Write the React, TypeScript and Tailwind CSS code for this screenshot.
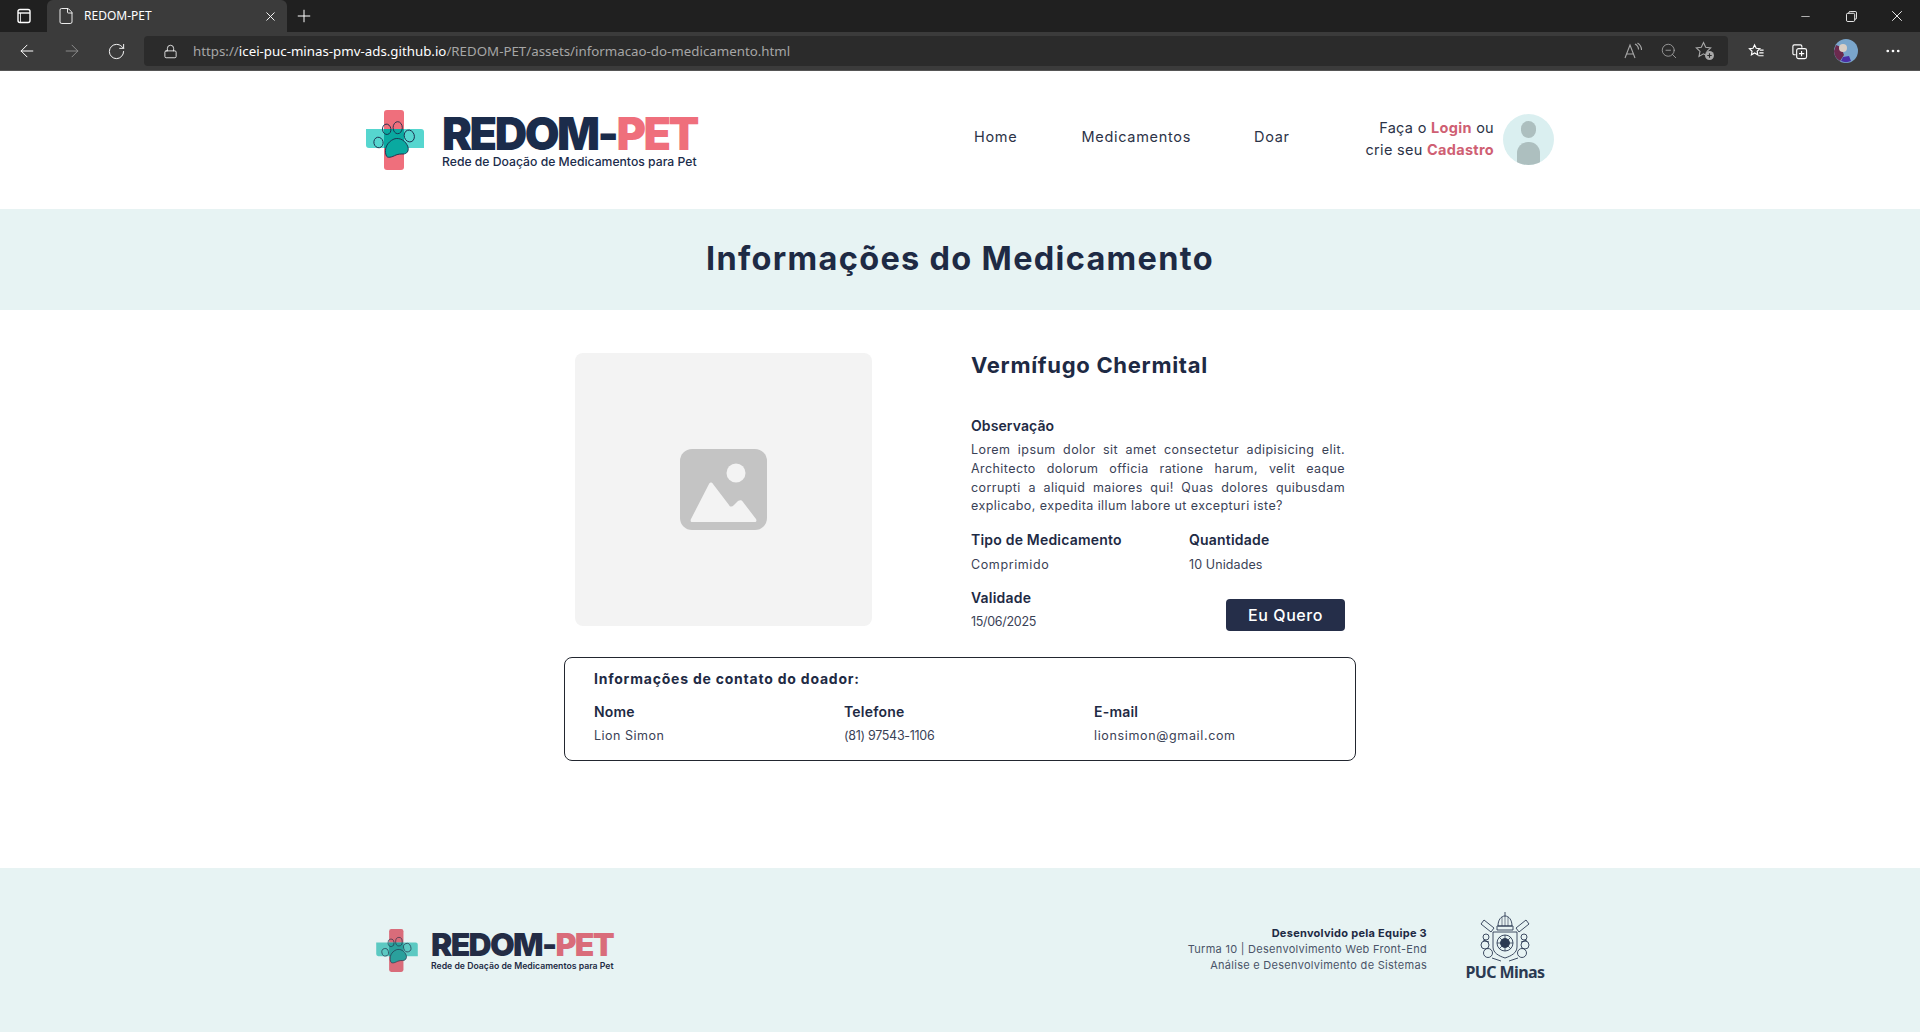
import React from 'react';
import { ArrowLeft, ArrowRight, File, Lock, Minus, MoreHorizontal, Plus, RotateCw, X, ZoomOut } from 'lucide-react';

const BODY_FONT = "font-['Inter','Noto_Sans',sans-serif]";

const PawCross: React.FC<{ className: string; muted?: boolean }> = ({ className, muted }) => {
  const red = muted ? '#d96c7a' : '#ef6f7c';
  const teal = muted ? '#5cc9c2' : '#56d6cf';
  const mid = muted ? '#2aa09c' : '#0aa9a0';
  const ink = muted ? '#232c45' : '#1b2c4b';
  return (
    <svg viewBox="0 0 58 60" className={className}>
      <rect x="18" y="0" width="20" height="60" rx="3" fill={red} />
      <path d="M0 19h55a3 3 0 0 1 3 3v16H3a3 3 0 0 1-3-3z" fill={teal} />
      <rect x="18" y="19" width="20" height="19" fill={mid} />
      <g fill="none" stroke={ink} strokeWidth="0.9">
        <ellipse cx="12.500" cy="32.500" rx="4.600" ry="5.300" transform="rotate(-12 12.500 32.500)" />
        <ellipse cx="20.700" cy="19.300" rx="4.200" ry="5.200" transform="rotate(-8 20.700 19.300)" />
        <ellipse cx="31.700" cy="17.700" rx="4.600" ry="6" />
        <ellipse cx="43.300" cy="26" rx="5" ry="6" transform="rotate(-18 43.300 26)" />
        <path d="M20 45c-2-6 1-13 8-16 6-2 12 2 14 8 1 4-1 7-5 7-3 0-4 0-7 1-4 2-9 4-10 0z" fill={mid} />
      </g>
    </svg>
  );
};

const Logo: React.FC<{ footer?: boolean }> = ({ footer }) =>
  footer ? (
    <div className="flex items-center gap-[13px] w-[240px] h-[50px]">
      <PawCross muted className="w-[42px] h-[43px] shrink-0" />
      <div className="flex flex-col mt-[2px]">
        <span className="font-['Inter',sans-serif] font-black text-[32px] leading-[30px] tracking-[-1.7px] text-[#232c45] whitespace-nowrap">
          REDOM-<span className="text-[#d96c7a]">PET</span>
        </span>
        <span className="font-['Inter',sans-serif] font-semibold text-[8.7px] leading-[11px] mt-[1px] text-[#232c45] whitespace-nowrap">
          Rede de Doação de Medicamentos para Pet
        </span>
      </div>
    </div>
  ) : (
    <div className="flex items-center gap-[18px] w-[332px] h-[60px]">
      <PawCross className="w-[58px] h-[60px] shrink-0" />
      <div className="flex flex-col mt-[2px]">
        <span className="font-['Inter',sans-serif] font-black text-[45px] leading-[40px] tracking-[-2.5px] text-[#1b2c4b] whitespace-nowrap">
          REDOM-<span className="text-[#ef6f7c]">PET</span>
        </span>
        <span className="font-['Inter',sans-serif] font-medium text-[12.2px] leading-[14px] mt-[1px] text-[#1b2c4b] whitespace-nowrap">
          Rede de Doação de Medicamentos para Pet
        </span>
      </div>
    </div>
  );

const PucCrest = () => (
  <svg viewBox="0 0 52 50" className="w-[52px] h-[50px]" fill="none" stroke="#2b3a52" strokeWidth="0.9">
    <path d="M26 0v4M19 14c0-6 3-10 7-10s7 4 7 10z" />
    <path d="M23 5v9M29 5v9M26 4v10" strokeWidth="0.6" />
    <path d="M18 14h16v4H18z" />
    <path d="M5 8l10 8-3 4-10-8zM47 8l-10 8 3 4 10-8z" />
    <path d="M14 20h24v15c0 6-6 9-12 11-6-2-12-5-12-11z" />
    <circle cx="26" cy="31" r="8" />
    <circle cx="26" cy="31" r="4.500" fill="#2b3a52" />
    <path d="M26 23v16M18 31h16M20 25l12 12M32 25L20 37" strokeWidth="0.8" />
    <circle cx="7" cy="25" r="3" />
    <circle cx="45" cy="25" r="3" />
    <circle cx="6" cy="33" r="4" />
    <circle cx="46" cy="33" r="4" />
    <circle cx="9" cy="41" r="4.500" />
    <circle cx="43" cy="41" r="4.500" />
    <path d="M4 28l6 2M48 28l-6 2M13 46c3 1 6 2 9 3M39 46c-3 1-6 2-9 3" />
  </svg>
);

const TabIcon = () => (
  <svg viewBox="0 0 16 16" className="w-[16px] h-[16px]" fill="none" stroke="#fff" strokeWidth="1.4">
    <rect x="2" y="1.500" width="12" height="13" rx="2" />
    <path d="M2 5h12" />
    <path d="M4.500 5v9" strokeWidth="0.8" />
  </svg>
);

const BrowserChrome = () => (
  <div className="shrink-0 font-['Noto_Sans',sans-serif]">
    <div className="h-[32px] bg-[#202020] flex items-center relative">
      <div className="w-[47px] flex justify-center"><TabIcon /></div>
      <div className="w-[240px] h-[32px] bg-[#3b3b3b] rounded-t-[6px] flex items-center pl-[10px] pr-[9px]">
        <File size={18} color="#fff" strokeWidth={1.2} />
        <span className="ml-[9px] text-[12px] text-white flex-1">REDOM-PET</span>
        <X size={15} color="#fff" strokeWidth={1.5} />
      </div>
      <div className="ml-[7px]"><Plus size={20} color="#fff" strokeWidth={1.2} /></div>
      <div className="ml-auto flex items-center">
        <div className="w-[46px] flex justify-center"><Minus size={13} color="#fff" strokeWidth={1.2} /></div>
        <div className="w-[46px] flex justify-center">
          <svg viewBox="0 0 12 12" className="w-[11px] h-[11px]" fill="none" stroke="#fff" strokeWidth="1">
            <rect x="0.500" y="2.500" width="9" height="9" rx="1.500" />
            <path d="M3 2.500V2a1.500 1.500 0 0 1 1.500-1.500H10A1.500 1.500 0 0 1 11.500 2v5.500A1.500 1.500 0 0 1 10 9h-.5" />
          </svg>
        </div>
        <div className="w-[46px] flex justify-center"><X size={18} color="#fff" strokeWidth={1.2} /></div>
      </div>
    </div>
    <div className="h-[39px] bg-[#3b3b3b] flex items-center border-b border-[#555555]">
      <div className="w-[144px] flex items-center pl-[17px] gap-[25px]">
        <ArrowLeft size={20} color="#fff" strokeWidth={1.2} />
        <ArrowRight size={20} color="#8a8a8a" strokeWidth={1.2} />
        <RotateCw size={19} color="#fff" strokeWidth={1.2} />
      </div>
      <div className="w-[1584px] h-[30px] bg-[#2b2b2b] rounded-[4px] flex items-center pl-[19px] pr-[13px]">
        <Lock size={15} color="#fff" strokeWidth={1.3} />
        <span className="ml-[15px] pt-[2px] text-[13.3px] text-[#a6a6a6] whitespace-nowrap">
          https://<span className="text-white">icei-puc-minas-pmv-ads.github.io</span>/REDOM-PET/assets/informacao-do-medicamento.html
        </span>
        <div className="ml-auto flex items-center gap-[17px]">
          <svg viewBox="0 0 19 18" className="w-[19px] h-[18px]" fill="none" stroke="#a8a8a8" strokeWidth="1.100">
            <path d="M1 16L6 3l5 13M2.800 12h6.400" />
            <path d="M11 2c2 1 3.500 3 3.500 5.500M13.500 1c2.500 1.500 4 4 4 7" />
          </svg>
          <ZoomOut size={18} color="#a8a8a8" strokeWidth={1.1} />
          <svg viewBox="0 0 20 20" className="w-[20px] h-[20px]" fill="none" stroke="#a8a8a8" strokeWidth="1.100">
            <path d="M8.500 1.500l2.200 4.800 5 .6-3.700 3.500 1 5-4.500-2.600-4.500 2.600 1-5L1.300 6.900l5-.6z" />
            <circle cx="14.500" cy="14.500" r="4.500" fill="#a8a8a8" stroke="none" />
            <path d="M14.500 12.300v4.400M12.300 14.500h4.400" stroke="#2b2b2b" />
          </svg>
        </div>
      </div>
      <div className="flex-1 flex items-center pl-[20px] gap-[26px]">
        <svg viewBox="0 0 18 18" className="w-[17px] h-[17px]" fill="none" stroke="#fff" strokeWidth="1.200">
          <path d="M7 2l1.700 3.600 3.800.5-2.800 2.600.7 3.800L7 10.600 3.600 12.500l.7-3.800L1.500 6.100l3.800-.5z" />
          <path d="M12.500 7.500h4M12 10.500h4.500M11 13.500h5.500" />
        </svg>
        <svg viewBox="0 0 18 18" className="w-[17px] h-[17px]" fill="none" stroke="#fff" strokeWidth="1.200">
          <path d="M5 12.500H3.500A1.500 1.500 0 0 1 2 11V3.500A1.500 1.500 0 0 1 3.500 2H10a1.500 1.500 0 0 1 1.500 1.500V5" />
          <rect x="6" y="6" width="10.500" height="10.500" rx="2" />
          <path d="M11.200 8.500v5.500M8.500 11.200H14" />
        </svg>
        <svg viewBox="0 0 24 24" className="w-[24px] h-[24px]">
          <circle cx="12" cy="12" r="12" fill="#7aa6cc" />
          <path d="M0 12a12 12 0 0 0 6 10l4-6-3-8-5-2z" fill="#6b2a4e" />
          <path d="M7 22a12 12 0 0 0 10 0l-2-5-6 1z" fill="#4a2fa8" />
          <circle cx="9" cy="9" r="4" fill="#d9cfc6" />
        </svg>
        <MoreHorizontal size={18} color="#fff" strokeWidth={1.6} />
      </div>
    </div>
  </div>
);

const Field: React.FC<{ label: string; value: string; className?: string; valueClass?: string }> = ({
  label,
  value,
  className,
  valueClass = 'tracking-[0.5px]',
}) => (
  <div className={className}>
    <div className="text-[14px] leading-[18px] font-semibold tracking-[0.2px] text-[#1e2a44]">{label}</div>
    <div className={`mt-[6px] text-[12.5px] leading-[18px] text-[#3a4256] ${valueClass}`}>{value}</div>
  </div>
);

export default function App() {
  return (
    <div className={`h-screen flex flex-col overflow-hidden bg-white ${BODY_FONT}`}>
      <BrowserChrome />

      <header className="h-[138px] shrink-0 flex justify-center pt-[39px]">
        <div className="w-[1188px] flex items-start">
          <Logo />
          <nav className="ml-[276px] flex items-center h-[54px] text-[14.5px] tracking-[0.7px] text-[#2c3347]">
            <a>Home</a>
            <a className="ml-[64px]">Medicamentos</a>
            <a className="ml-[63px]">Doar</a>
          </nav>
          <div className="ml-auto flex items-center gap-[9px] mt-[4px]">
            <div className="-mt-[2px] text-right text-[14.5px] leading-[22px] tracking-[0.3px] text-[#2c3347]">
              <div>Faça o <span className="font-bold text-[#cf5f73]">Login</span> ou</div>
              <div>crie seu <span className="font-bold text-[#cf5f73]">Cadastro</span></div>
            </div>
            <div className="w-[51px] h-[51px] rounded-full bg-[#daeff0] overflow-hidden flex flex-col items-center">
              <div className="w-[15px] h-[18px] rounded-full bg-[#adbfbf] mt-[7px]" />
              <div className="w-[23px] h-[24px] rounded-t-[11px] bg-[#adbfbf] mt-[4px]" />
            </div>
          </div>
        </div>
      </header>

      <div className="h-[101px] shrink-0 bg-[#e7f3f3] flex items-center justify-center">
        <h1 className="text-[32.5px] font-bold tracking-[1.3px] text-[#1e2a44]">Informações do Medicamento</h1>
      </div>

      <main className="flex-1 pt-[43px]">
        <div className="w-[792px] mx-auto">
          <div className="flex pl-[11px]">
            <div className="w-[297px] h-[273px] bg-[#f3f3f3] rounded-[8px] flex items-center justify-center">
              <svg viewBox="0 0 87 81" className="w-[87px] h-[81px]">
                <rect width="87" height="81" rx="12" fill="#c4c4c4" />
                <circle cx="56" cy="24" r="9.500" fill="#f3f3f3" />
                <path
                  d="M29 35c1-2 3-2 4 0l16 21c1 2 3 2 5 0l4-4c2-1 4-1 5 1l13 17c1 2 0 3-1 3H12c-1 0-2-1-1-3z"
                  fill="#f3f3f3"
                />
              </svg>
            </div>
            <div className="ml-[99px] w-[374px]">
              <h2 className="text-[22px] leading-[24px] font-bold tracking-[0.7px] text-[#1e2a44]">Vermífugo Chermital</h2>
              <div className="mt-[40px] text-[14px] leading-[18px] font-semibold tracking-[0.1px] text-[#1e2a44]">Observação</div>
              <p className="mt-[6px] text-[12.5px] leading-[18.8px] tracking-[0.42px] text-justify text-[#3a4256]">
                Lorem ipsum dolor sit amet consectetur adipisicing elit. Architecto dolorum officia ratione harum, velit eaque corrupti a aliquid maiores qui! Quas dolores quibusdam explicabo, expedita illum labore ut excepturi iste?
              </p>
              <div className="mt-[15px] flex">
                <Field label="Tipo de Medicamento" value="Comprimido" className="w-[218px]" valueClass="pt-[1px] tracking-[0.6px]" />
                <Field label="Quantidade" value="10 Unidades" valueClass="pt-[1px] tracking-[0.1px]" />
              </div>
              <div className="mt-[15px] flex items-end justify-between">
                <Field label="Validade" value="15/06/2025" valueClass="tracking-[-0.3px]" />
                <button className="w-[119px] h-[32px] rounded-[4px] bg-[#252e49] text-white text-[16px] font-medium tracking-[0.6px]">
                  Eu Quero
                </button>
              </div>
            </div>
          </div>

          <section className="mt-[26px] h-[104px] border border-[#22262f] rounded-[8px] px-[29px] pt-[12px]">
            <h3 className="text-[14px] leading-[18px] font-bold tracking-[0.78px] text-[#1e2a44]">Informações de contato do doador:</h3>
            <div className="mt-[15px] grid grid-cols-[250px_250px_1fr]">
              <Field label="Nome" value="Lion Simon" />
              <Field label="Telefone" value="(81) 97543-1106" valueClass="tracking-[-0.3px]" />
              <Field label="E-mail" value="lionsimon@gmail.com" valueClass="tracking-[0.65px]" />
            </div>
          </section>
        </div>
      </main>

      <footer className="h-[164px] shrink-0 bg-[#e7f3f3] flex justify-center">
        <div className="w-[1168px] pt-[57px] flex items-start">
          <Logo footer />
          <div className="ml-auto text-right text-[11px] leading-[16px] text-[#4a5468] tracking-[0.28px]">
            <div className="font-bold text-[#1e2a44]">Desenvolvido pela Equipe 3</div>
            <div>Turma 10 | Desenvolvimento Web Front-End</div>
            <div>Análise e Desenvolvimento de Sistemas</div>
          </div>
          <div className="ml-[39px] -mt-[13px] flex flex-col items-center w-[78px]">
            <PucCrest />
            <span className="pt-[1px] font-['Noto_Sans',sans-serif] font-bold text-[16px] leading-[18px] tracking-[-0.6px] text-[#2b3a52] whitespace-nowrap">PUC Minas</span>
          </div>
        </div>
      </footer>
    </div>
  );
}
